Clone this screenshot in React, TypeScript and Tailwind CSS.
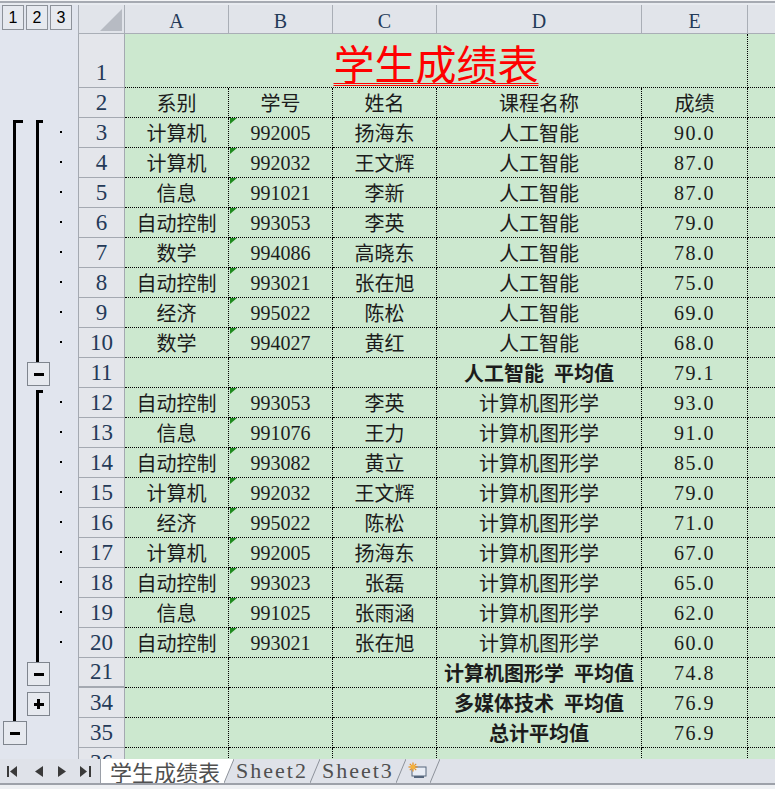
import React from 'react'

type L1 = 'none' | 'start' | 'line' | 'btn'
type L2 = 'none' | 'start' | 'line' | 'minus' | 'plus'

type RowData = {
  n: number
  a?: string
  b?: string
  c?: string
  d?: string
  e?: string
  sum?: boolean
}

const CJK = "font-['Noto_Sans_CJK_SC',sans-serif]"
const SERIF = "font-['Liberation_Serif','Noto_Sans_CJK_SC',serif]"

const rows: RowData[] = [
  { n: 3, a: '计算机', b: '992005', c: '扬海东', d: '人工智能', e: '90.0' },
  { n: 4, a: '计算机', b: '992032', c: '王文辉', d: '人工智能', e: '87.0' },
  { n: 5, a: '信息', b: '991021', c: '李新', d: '人工智能', e: '87.0' },
  { n: 6, a: '自动控制', b: '993053', c: '李英', d: '人工智能', e: '79.0' },
  { n: 7, a: '数学', b: '994086', c: '高晓东', d: '人工智能', e: '78.0' },
  { n: 8, a: '自动控制', b: '993021', c: '张在旭', d: '人工智能', e: '75.0' },
  { n: 9, a: '经济', b: '995022', c: '陈松', d: '人工智能', e: '69.0' },
  { n: 10, a: '数学', b: '994027', c: '黄红', d: '人工智能', e: '68.0' },
  { n: 11, d: '人工智能\u2002平均值', e: '79.1', sum: true },
  { n: 12, a: '自动控制', b: '993053', c: '李英', d: '计算机图形学', e: '93.0' },
  { n: 13, a: '信息', b: '991076', c: '王力', d: '计算机图形学', e: '91.0' },
  { n: 14, a: '自动控制', b: '993082', c: '黄立', d: '计算机图形学', e: '85.0' },
  { n: 15, a: '计算机', b: '992032', c: '王文辉', d: '计算机图形学', e: '79.0' },
  { n: 16, a: '经济', b: '995022', c: '陈松', d: '计算机图形学', e: '71.0' },
  { n: 17, a: '计算机', b: '992005', c: '扬海东', d: '计算机图形学', e: '67.0' },
  { n: 18, a: '自动控制', b: '993023', c: '张磊', d: '计算机图形学', e: '65.0' },
  { n: 19, a: '信息', b: '991025', c: '张雨涵', d: '计算机图形学', e: '62.0' },
  { n: 20, a: '自动控制', b: '993021', c: '张在旭', d: '计算机图形学', e: '60.0' },
  { n: 21, d: '计算机图形学\u2002平均值', e: '74.8', sum: true },
  { n: 34, d: '多媒体技术\u2002平均值', e: '76.9', sum: true },
  { n: 35, d: '总计平均值', e: '76.9', sum: true },
  { n: 36 },
]

function outlineFor(n: number): { l1: L1; l2: L2; dot: boolean } {
  if (n === 3 || n === 12) return { l1: n === 3 ? 'start' : 'line', l2: 'start', dot: true }
  if ((n > 3 && n <= 10) || (n > 12 && n <= 20)) return { l1: 'line', l2: 'line', dot: true }
  if (n === 11 || n === 21) return { l1: 'line', l2: 'minus', dot: false }
  if (n === 34) return { l1: 'line', l2: 'plus', dot: false }
  if (n === 35) return { l1: 'btn', l2: 'none', dot: false }
  return { l1: 'none', l2: 'none', dot: false }
}

function OutlineButton({ plus, className }: { plus?: boolean; className?: string }) {
  return (
    <div className={`grid h-[24px] shrink-0 place-items-center border border-[#7f858e] bg-[#e6e9ef] ${className ?? ''}`}>
      <div className="col-start-1 row-start-1 h-[3px] w-[10px] bg-black" />
      {plus && <div className="col-start-1 row-start-1 h-[10px] w-[3px] bg-black" />}
    </div>
  )
}

function OutlineCell({ n }: { n: number }) {
  const { l1, l2, dot } = outlineFor(n)
  return (
    <div className="flex w-[78px] shrink-0 self-stretch">
      <div className="flex w-[27px] shrink-0 flex-col">
        {l1 === 'start' && <div className="ml-[13px] mt-[2px] w-[10px] flex-1 border-l-[3px] border-t-[3px] border-black" />}
        {l1 === 'line' && <div className="ml-[13px] flex-1 border-l-[3px] border-black" />}
        {l1 === 'btn' && (
          <>
            <div className="ml-[13px] h-[3px] border-l-[3px] border-black" />
            <OutlineButton className="ml-[3px] w-[24px]" />
          </>
        )}
      </div>
      <div className="flex w-[23px] shrink-0 flex-col">
        {l2 === 'start' && <div className="ml-[9px] mt-[2px] w-[7px] flex-1 border-l-[3px] border-t-[3px] border-black" />}
        {l2 === 'line' && <div className="ml-[9px] flex-1 border-l-[3px] border-black" />}
        {l2 === 'minus' && (
          <>
            <div className="ml-[9px] h-[4px] border-l-[3px] border-black" />
            <OutlineButton className="w-[23px]" />
          </>
        )}
        {l2 === 'plus' && <OutlineButton plus className="mt-[4px] w-[23px]" />}
      </div>
      <div className="flex flex-1 items-center">
        {dot && <div className="ml-[10px] mt-[-2px] h-[2px] w-[2px] bg-black" />}
      </div>
    </div>
  )
}

function RowHeader({ n, h }: { n: number; h: string }) {
  return (
    <div className={`flex ${h} w-[47px] shrink-0 items-end justify-center border-x border-b border-[#a4a9b1] bg-[#e4e6eb] pb-[3px] text-[23px] leading-none text-[#243a58] ${SERIF} ${n === 21 ? 'border-b-2' : ''}`}>
      {n}
    </div>
  )
}

const cellBase = 'flex shrink-0 items-center justify-center border-r border-b border-dotted border-black bg-[#cce8cf] text-[20px] leading-none text-[#1c1c1c]'

function SheetRow({ r }: { r: RowData }) {
  return (
    <div className="flex h-[30px]">
      <OutlineCell n={r.n} />
      <RowHeader n={r.n} h="h-[30px]" />
      <div className={`${cellBase} w-[104px] ${CJK}`}>{r.a}</div>
      <div className={`${cellBase} relative w-[104px] ${SERIF}`}>
        {r.b && <div className="absolute left-[1px] top-0 h-0 w-0 border-r-[7px] border-t-[6px] border-r-transparent border-t-[#1f8a1f]" />}
        {r.b}
      </div>
      <div className={`${cellBase} w-[104px] ${CJK}`}>{r.c}</div>
      <div className={`${cellBase} w-[205px] whitespace-nowrap ${CJK} ${r.sum ? 'font-bold' : ''}`}>{r.d}</div>
      <div className={`${cellBase} w-[106px] tracking-[1.5px] ${SERIF}`}>{r.e}</div>
      <div className="flex-1 border-b border-dotted border-black bg-[#cce8cf]" />
    </div>
  )
}

const colHead = `flex h-full shrink-0 items-end justify-center border-r border-b border-[#a9aeb6] bg-[#e1e4ea] pb-[2px] text-[20px] leading-none text-[#243a58] ${SERIF}`

function TabSlant({ white }: { white?: boolean }) {
  return (
    <svg width="10" height="24" viewBox="0 0 10 24" className="shrink-0">
      {white && <polygon points="0,0 10,0 0,24" fill="#ffffff" />}
      <line x1="0" y1="24" x2="10" y2="0" stroke="#8d929a" strokeWidth="1" />
    </svg>
  )
}

function NavArrows() {
  return (
    <div className="flex w-[100px] shrink-0 items-center pl-[7px] pt-[1px]">
      <svg width="11" height="11" viewBox="0 0 11 11">
        <rect x="0" y="0" width="2" height="11" fill="#3a3a3a" />
        <polygon points="10,0 3,5.5 10,11" fill="#3a3a3a" />
      </svg>
      <svg width="8" height="11" viewBox="0 0 8 11" className="ml-[17px]">
        <polygon points="8,0 0,5.5 8,11" fill="#3a3a3a" />
      </svg>
      <svg width="8" height="11" viewBox="0 0 8 11" className="ml-[15px]">
        <polygon points="0,0 8,5.5 0,11" fill="#3a3a3a" />
      </svg>
      <svg width="11" height="11" viewBox="0 0 11 11" className="ml-[14px]">
        <polygon points="0,0 7,5.5 0,11" fill="#3a3a3a" />
        <rect x="9" y="0" width="2" height="11" fill="#3a3a3a" />
      </svg>
    </div>
  )
}

export default function App() {
  return (
    <div className="flex h-[789px] w-[775px] flex-col overflow-hidden bg-[#e1e5ee]">
      <div className="h-[1px] shrink-0 bg-[#f3f4f6]" />
      <div className="h-[2px] shrink-0 bg-[#a6aab2]" />
      <div className="h-[2px] shrink-0 bg-[#e8ebf0]" />

      <div className="min-h-0 flex-1 overflow-hidden">
        {/* column headers */}
        <div className="flex h-[29px]">
          <div className={`flex w-[78px] shrink-0 gap-[2px] pl-[2px] text-[16px] leading-none text-black font-['Liberation_Sans',sans-serif]`}>
            {['1', '2', '3'].map(l => (
              <div key={l} className="flex h-[25px] w-[22px] items-center justify-center border border-[#8d929a] bg-[#e6e9ef]">{l}</div>
            ))}
          </div>
          <div className="flex h-full w-[47px] shrink-0 items-end justify-end border-x border-b border-[#a9aeb6] bg-[#e1e4ea] pb-[2px] pr-[2px]">
            <div className="h-0 w-0 border-b-[22px] border-l-[22px] border-b-[#b7bbc3] border-l-transparent" />
          </div>
          <div className={`${colHead} w-[104px]`}>A</div>
          <div className={`${colHead} w-[104px]`}>B</div>
          <div className={`${colHead} w-[104px]`}>C</div>
          <div className={`${colHead} w-[205px]`}>D</div>
          <div className={`${colHead} w-[106px]`}>E</div>
          <div className="h-full flex-1 border-b border-[#a9aeb6] bg-[#e1e4ea]" />
        </div>

        {/* row 1: title */}
        <div className="flex h-[54px]">
          <OutlineCell n={1} />
          <RowHeader n={1} h="h-[54px]" />
          <div className="flex w-[623px] shrink-0 items-end justify-center border-r border-b border-dotted border-black bg-[#cce8cf] pb-[4px]">
            <span className={`text-[41px] leading-none text-[#ff0000] underline decoration-double decoration-1 underline-offset-[3px] ${CJK}`}>学生成绩表</span>
          </div>
          <div className="flex-1 border-b border-dotted border-black bg-[#cce8cf]" />
        </div>

        {/* row 2: field names */}
        <div className="flex h-[30px]">
          <OutlineCell n={2} />
          <RowHeader n={2} h="h-[30px]" />
          <div className={`${cellBase} w-[104px] ${CJK}`}>系别</div>
          <div className={`${cellBase} w-[104px] ${CJK}`}>学号</div>
          <div className={`${cellBase} w-[104px] ${CJK}`}>姓名</div>
          <div className={`${cellBase} w-[205px] ${CJK}`}>课程名称</div>
          <div className={`${cellBase} w-[106px] ${CJK}`}>成绩</div>
          <div className="flex-1 border-b border-dotted border-black bg-[#cce8cf]" />
        </div>

        {rows.map(r => (
          <SheetRow key={r.n} r={r} />
        ))}
      </div>

      {/* sheet tabs */}
      <div className="flex h-[24px] shrink-0 items-stretch bg-[#dfe2e9]">
        <NavArrows />
        <div className={`flex items-center border-l border-[#9a9fa7] bg-white pl-[9px] pr-[4px] text-[22px] leading-none text-[#505050] ${CJK}`}>学生成绩表</div>
        <TabSlant white />
        <div className={`flex items-center pl-[2px] pr-[2px] text-[22px] leading-none tracking-[2px] text-[#505050] ${SERIF}`}>Sheet2</div>
        <TabSlant />
        <div className={`flex items-center pl-[2px] pr-[2px] text-[22px] leading-none tracking-[2px] text-[#505050] ${SERIF}`}>Sheet3</div>
        <TabSlant />
        <div className="flex items-center px-[2px]">
          <svg width="20" height="18" viewBox="0 0 20 18">
            <rect x="4" y="5" width="14" height="9" fill="#e8edf5" stroke="#56677d" strokeWidth="1" />
            <rect x="6" y="14" width="10" height="2" fill="#56677d" />
            <g stroke="#e8901c" strokeWidth="1.2">
              <line x1="5" y1="0.5" x2="5" y2="9.5" />
              <line x1="0.5" y1="5" x2="9.5" y2="5" />
              <line x1="1.8" y1="1.8" x2="8.2" y2="8.2" />
              <line x1="8.2" y1="1.8" x2="1.8" y2="8.2" />
            </g>
            <circle cx="5" cy="5" r="2.3" fill="#f6b23a" />
          </svg>
        </div>
        <TabSlant />
      </div>
      <div className="h-[2px] shrink-0 bg-[#9da1a9]" />
      <div className="h-[4px] shrink-0 bg-[#eef0f3]" />
    </div>
  )
}
